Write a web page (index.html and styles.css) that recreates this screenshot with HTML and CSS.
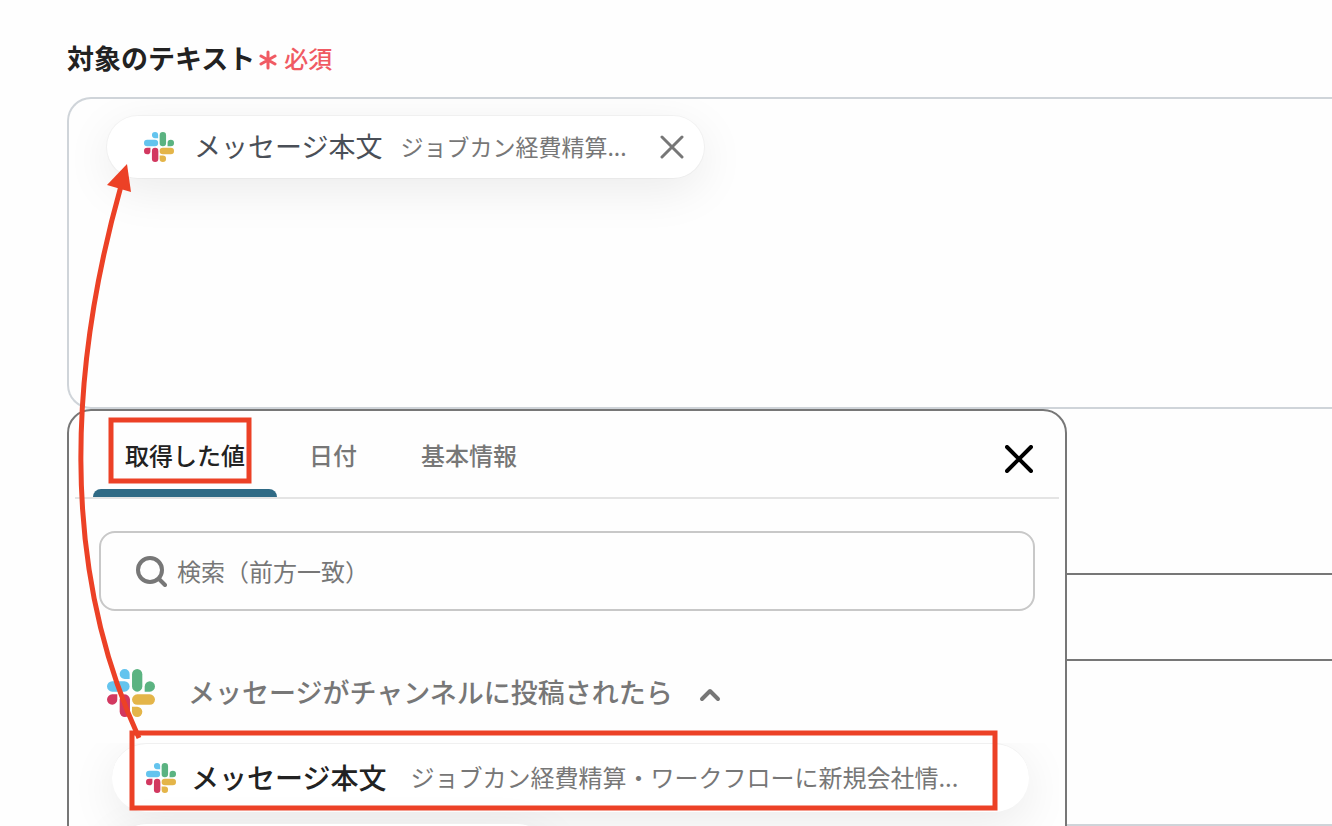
FILE: index.html
```html
<!DOCTYPE html>
<html lang="ja">

<head>
    <meta charset="UTF-8">
    <meta name="viewport" content="width=device-width, initial-scale=1.0">
    <title>対象のテキスト</title>
    <link rel="stylesheet" href="styles.css">
</head>

<body>
    <!-- Slack logo, used three times below -->
    <svg class="sprite" aria-hidden="true">
        <symbol id="slack" viewBox="0 0 140 140">
            <path fill="#64c4ee" d="M66 29H51.500A14.500 14.500 0 1 1 66 14.500Z" />
            <rect fill="#64c4ee" x="0" y="36" width="66" height="30" rx="15" />
            <rect fill="#5bb381" x="73" y="0" width="30" height="66" rx="15" />
            <path fill="#5bb381" d="M110 66V51A15 15 0 1 1 125 66Z" />
            <path fill="#d23860" d="M30 74V88.500A15 15 0 1 1 15 74Z" />
            <rect fill="#d23860" x="37" y="74" width="30" height="66" rx="15" />
            <rect fill="#e4b549" x="73" y="74" width="67" height="30" rx="15" />
            <path fill="#e4b549" d="M73 110H88A15 15 0 1 1 73 125Z" />
        </symbol>
    </svg>

    <main class="form">
        <div class="form-label">
            <h2>対象のテキスト</h2>
            <span class="required">
                <svg width="18" height="24" viewBox="0 0 18 24" aria-hidden="true">
                    <path d="M9 6V22M2 10L16 18M16 10L2 18" />
                </svg>
                必須
            </span>
        </div>

        <div class="field-wrap">
            <div class="field">
                <div class="chip">
                    <svg class="logo-small"><use href="#slack" /></svg>
                    <span class="chip-name">メッセージ本文</span>
                    <span class="chip-value">ジョブカン経費精算...</span>
                    <button type="button" class="chip-remove" aria-label="削除">
                        <svg width="24" height="24" viewBox="0 0 24 24"><path d="M2 2L22 22M22 2L2 22" /></svg>
                    </button>
                </div>
            </div>

            <!-- Value picker -->
            <section class="picker">
                <div class="tabs">
                    <button type="button" class="tab active">取得した値</button>
                    <button type="button" class="tab">日付</button>
                    <button type="button" class="tab">基本情報</button>
                    <button type="button" class="close" aria-label="閉じる">
                        <svg width="28" height="28" viewBox="0 0 28 28"><path d="M2 2L26 26M26 2L2 26" /></svg>
                    </button>
                </div>

                <label class="search">
                    <svg width="32" height="32" viewBox="0 0 32 32" aria-hidden="true">
                        <circle cx="15" cy="15" r="12" />
                        <path d="M24 24L30 30" />
                    </svg>
                    <input type="text" placeholder="検索（前方一致）" aria-label="検索">
                </label>

                <button type="button" class="group">
                    <svg class="logo-large"><use href="#slack" /></svg>
                    <span>メッセージがチャンネルに投稿されたら</span>
                    <svg class="chevron" width="22" height="18" viewBox="0 0 22 18"><path d="M3 15L11 7L19 15" /></svg>
                </button>

                <div class="values">
                    <button type="button" class="value">
                        <svg class="logo-small"><use href="#slack" /></svg>
                        <span class="value-name">メッセージ本文</span>
                        <span class="value-text">ジョブカン経費精算・ワークフローに新規会社情...</span>
                    </button>
                    <button type="button" class="value value-short" aria-label="次の値"></button>
                </div>
            </section>
        </div>

        <div class="field-next"></div>
        <div class="field-last"></div>
    </main>

    <!-- Guide marks drawn over the form -->
    <svg class="guide" width="1332" height="826" viewBox="0 0 1332 826" aria-hidden="true">
        <rect x="111" y="420" width="138" height="61" />
        <rect x="132" y="733" width="863" height="75" />
        <path class="guide-line" d="M121 186C72 360 57 560 139 738" />
        <path class="guide-head" d="M127 164L107 185L131 192Z" />
    </svg>
</body>

</html>
```

FILE: styles.css
```css
* {
    margin: 0;
    padding: 0;
    box-sizing: border-box;
}

body {
    height: 100vh;
    overflow: hidden;
    background: #fefefe;
    color: #222;
    font-family: "Noto Sans CJK JP", sans-serif;
    font-size: 24px;
    line-height: 36px;
}

button,
input {
    border: none;
    background: none;
    font: inherit;
    color: inherit;
}

button {
    cursor: pointer;
}

svg {
    flex: none;
    fill: none;
    stroke-linecap: round;
    stroke-linejoin: round;
}

.sprite {
    display: none;
}

.logo-small {
    width: 30px;
    height: 30px;
}

.logo-large {
    width: 48px;
    height: 48px;
}

.form {
    height: 100vh;
    padding: 38px 0 0 67px;
    overflow: hidden;
}

.form-label {
    display: flex;
    align-items: center;
    gap: 4px;
    height: 40px;
    margin-bottom: 19px;
}

.form-label h2 {
    font-size: 27px;
    font-weight: 700;
}

.required {
    display: flex;
    align-items: center;
    gap: 7px;
    color: #f05a63;
    font-weight: 500;
}

.required svg {
    stroke: #f05a63;
    stroke-width: 3;
}

/* Text field */

.field-wrap {
    position: relative;
}

.field {
    height: 312px;
    padding: 17px 38px;
    border: 2px solid #cfd4d9;
    border-right: none;
    border-radius: 24px 0 0 24px;
    overflow: hidden;
}

.chip {
    display: inline-flex;
    align-items: center;
    height: 62px;
    padding: 0 20px 0 37px;
    border-radius: 31px;
    background: #fff;
    box-shadow: 0 0 0 1px rgba(0, 0, 0, 0.03), 0 12px 48px rgba(0, 0, 0, 0.08);
}

.chip-name,
.chip-value,
.group span,
.value-name,
.value-text {
    padding-bottom: 2px;
}

.chip-name {
    margin: 0 18px 0 20px;
    font-size: 27px;
    color: #4a4f57;
}

.chip-value {
    font-size: 23px;
    color: #777;
}

.chip-remove {
    display: flex;
    margin-left: 33px;
}

.chip-remove svg {
    stroke: #777;
    stroke-width: 3;
}

/* Picker */

.picker {
    position: absolute;
    top: 100%;
    left: 0;
    width: calc(100% - 265px);
    height: 600px;
    padding: 0 6px;
    border: 2px solid #777;
    border-radius: 24px;
    background: #fefefe;
}

.tabs {
    display: flex;
    height: 88px;
    padding: 0 26px 0 18px;
    border-bottom: 2px solid #e4e4e4;
}

.tab {
    padding: 2px 32px 0;
    border-radius: 8px;
    color: #777;
    font-weight: 500;
    position: relative;
}

.tab.active {
    color: #222;
}

.tab.active::after {
    content: "";
    position: absolute;
    left: 0;
    right: 0;
    bottom: 0;
    height: 8px;
    border-radius: 8px 8px 0 0;
    background: #2f6a85;
}

.close {
    display: flex;
    align-items: center;
    margin-left: auto;
    padding-top: 10px;
}

.close svg {
    stroke: #000;
    stroke-width: 4;
}

.search {
    display: flex;
    align-items: center;
    gap: 10px;
    height: 80px;
    margin: 32px 24px;
    padding: 0 34px;
    border: 2px solid #c8c8c8;
    border-radius: 16px;
}

.search svg {
    stroke: #777;
    stroke-width: 4;
}

.search input {
    flex: 1;
    outline: none;
}

.search input::placeholder {
    color: #777;
    opacity: 1;
}

.group {
    display: flex;
    align-items: center;
    width: 100%;
    height: 100px;
    padding: 0 32px;
    color: #777;
    font-size: 27px;
    font-weight: 500;
}

.group span {
    margin: 0 26px 0 33px;
}

.chevron {
    stroke: #777;
    stroke-width: 4;
}

.values {
    display: flex;
    flex-direction: column;
    align-items: flex-start;
    gap: 11px;
    padding: 0 30px 40px 37px;
    overflow: hidden;
}

.value {
    display: flex;
    align-items: center;
    width: 100%;
    height: 69px;
    padding: 0 34px;
    border-radius: 35px;
    border-top: 1px solid #f0f0f0;
    background: #fff;
    box-shadow: 0 12px 48px rgba(0, 0, 0, 0.08);
}

.value-short {
    width: 48%;
}

.value-name {
    margin: 0 24px 0 15px;
    font-size: 28px;
    font-weight: 500;
}

.value-text {
    color: #777;
}

/* Fields below the picker */

.field-next {
    height: 88px;
    margin-top: 164px;
    border: 2px solid #777;
    border-right: none;
}

.field-last {
    height: 200px;
    margin-top: 163px;
    border: 2px solid #cfd4d9;
    border-right: none;
}

/* Guide marks */

.guide {
    position: absolute;
    top: 0;
    left: 0;
    stroke: #ec4126;
    stroke-width: 5;
    stroke-linejoin: miter;
    pointer-events: none;
}

.guide-line {
    stroke-linecap: butt;
}

.guide-head {
    fill: #ec4126;
    stroke: none;
}
```
